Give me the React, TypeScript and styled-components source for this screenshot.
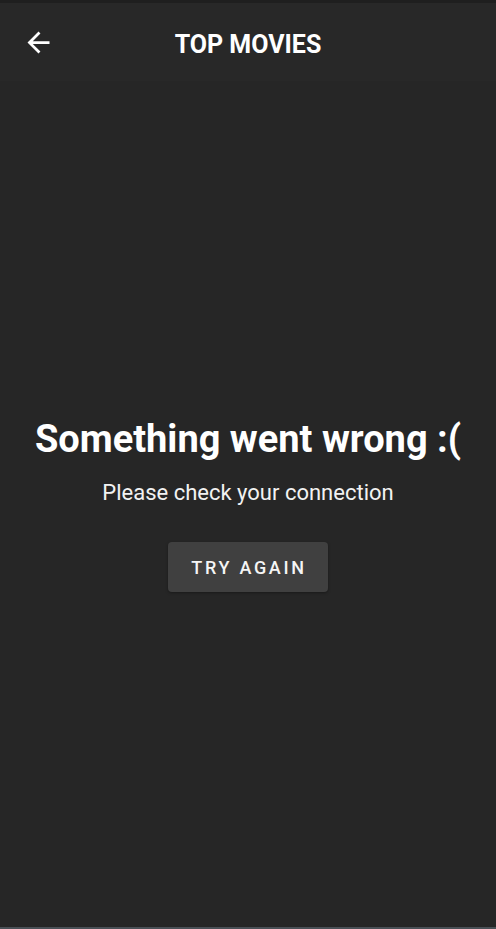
import React from "react";
import styled, { createGlobalStyle } from "styled-components";

const Global = createGlobalStyle`
  html, body { margin: 0; padding: 0; background: #262626; }
  body { font-family: Roboto, "Noto Sans", "Liberation Sans", sans-serif; }
  #root { height: 929px; }
`;

const Screen = styled.div`
  height: 929px;
  display: flex;
  flex-direction: column;
  background: #262626;
  color: #ffffff;
`;

const StatusStrip = styled.div`
  height: 3px;
  background: #1f1f1f;
  flex: none;
`;

const Toolbar = styled.header`
  height: 78px;
  flex: none;
  display: flex;
  align-items: center;
  position: relative;
  background: #282828;
`;

const BackButton = styled.button`
  width: 56px;
  height: 56px;
  margin-left: 10px;
  display: flex;
  align-items: center;
  justify-content: center;
  background: none;
  border: none;
  padding: 0;
  color: #ffffff;
`;

const Title = styled.h1`
  position: absolute;
  left: 0;
  right: 0;
  top: 0;
  bottom: 0;
  margin: 0;
  padding-top: 4px;
  display: flex;
  align-items: center;
  justify-content: center;
  font-size: 25px;
  font-weight: 700;
  pointer-events: none;
`;

const Body = styled.main`
  flex: 1;
  display: flex;
  flex-direction: column;
  align-items: center;
  justify-content: center;
`;

const Heading = styled.h2`
  margin: 0;
  font-size: 38px;
  font-weight: 700;
  line-height: 46px;
`;

const Message = styled.p`
  margin: 16px 0 0;
  font-size: 22px;
  font-weight: 400;
  line-height: 30px;
  color: #f2f2f2;
`;

const RetryButton = styled.button`
  margin-top: 34px;
  width: 160px;
  height: 50px;
  padding: 0 0 0 2px;
  border: none;
  border-radius: 4px;
  background: #404040;
  color: #f5f5f5;
  font-family: Roboto, "Noto Sans", sans-serif;
  font-size: 18px;
  font-weight: 500;
  letter-spacing: 2.7px;
  box-shadow: 0 1px 3px rgba(0, 0, 0, 0.35);
`;

const BottomStrip = styled.div`
  height: 2px;
  flex: none;
  background: #4a5056;
`;

export default function App() {
  return (
    <>
      <Global />
      <Screen>
        <StatusStrip />
        <Toolbar>
          <BackButton aria-label="Back">
            <svg width="33" height="33" viewBox="0 0 24 24" fill="currentColor">
              <path d="M20 11H7.83l5.59-5.59L12 4l-8 8 8 8 1.41-1.41L7.83 13H20v-2z" />
            </svg>
          </BackButton>
          <Title>TOP MOVIES</Title>
        </Toolbar>
        <Body>
          <Heading>Something went wrong :(</Heading>
          <Message>Please check your connection</Message>
          <RetryButton>TRY AGAIN</RetryButton>
        </Body>
        <BottomStrip />
      </Screen>
    </>
  );
}
